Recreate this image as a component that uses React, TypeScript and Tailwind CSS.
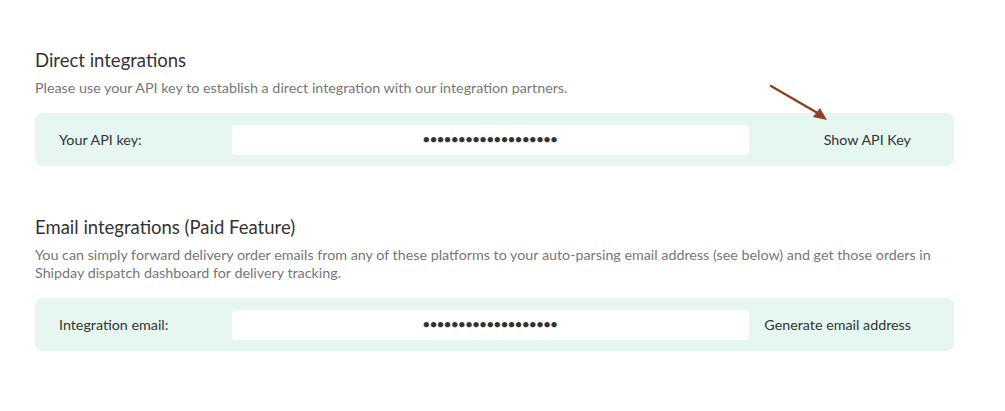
import React from "react";

const font = { fontFamily: "Lato, 'Noto Sans', sans-serif" };

function Row({ label, action }: { label: string; action: string }) {
  return (
    <div className="flex items-center h-[53px] rounded-lg bg-[#e5f7f0] pl-6 pr-[43px]">
      <div className="w-[173px] text-[14.3px] text-[#333333]">{label}</div>
      <div className="w-[517px] h-[30px] rounded bg-white flex items-center justify-center">
        <span className="text-[#333333] text-[11px] tracking-[0.5px]">{"●".repeat(19)}</span>
      </div>
      <div className="flex-1 flex justify-end text-[14.3px] text-[#333333]">{action}</div>
    </div>
  );
}

export default function App() {
  return (
    <div className="relative w-[1005px] h-[411px] bg-white" style={font}>
      <div className="pl-[35px] pr-[51px] pt-[48px]">
        <h2 className="text-[18.5px] leading-[24px] text-[#333333]">Direct integrations</h2>
        <p className="mt-[7px] text-[14.3px] leading-[18px] text-[#777777]">
          Please use your API key to establish a direct integration with our integration partners.
        </p>
        <div className="mt-[16px]">
          <Row label="Your API key:" action="Show API Key" />
        </div>
        <h2 className="mt-[49px] text-[18.5px] leading-[24px] text-[#333333]">Email integrations (Paid Feature)</h2>
        <p className="mt-[7px] text-[14.3px] leading-[18px] text-[#777777]">
          You can simply forward delivery order emails from any of these platforms to your auto-parsing email address (see below) and get those orders in Shipday dispatch dashboard for delivery tracking.
        </p>
        <div className="mt-[16px]">
          <Row label="Integration email:" action="Generate email address" />
        </div>
      </div>
      <svg className="absolute left-[765px] top-[82px]" width="70" height="42" viewBox="0 0 70 42">
        <line x1="6" y1="4" x2="56" y2="33" stroke="#8b4226" strokeWidth="2.5" strokeLinecap="round" />
        <polygon points="62,38 48,35 55,26" fill="#8b4226" />
      </svg>
    </div>
  );
}
